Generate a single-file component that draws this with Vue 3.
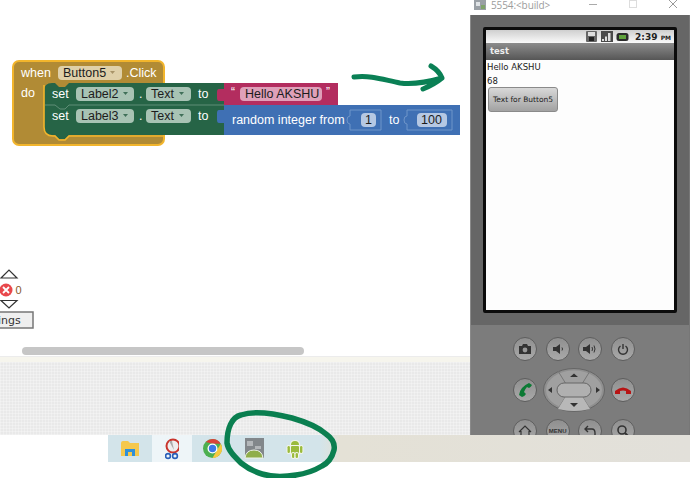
<script setup>
</script>

<template>
  <div class="page">
    <div class="top">
      <div class="workspace">
        <svg class="canvas" width="470" height="357" viewBox="0 0 470 357">
          <rect x="13" y="61" width="151" height="84" rx="6" fill="#b18b35" stroke="#f2b52c" stroke-width="2" />
          <path d="M44 91 Q44 83 52 83 H55 L59 87 H65 L69 83 H224 V135 H69 L65 139 H59 L55 135 H52 Q44 135 44 127 Z" fill="#266446" />
          <path d="M44 85 V127 Q44 136 53 136 H55 L59 140 H65 L69 136 H165" fill="none" stroke="#f2b52c" stroke-width="1.6" />
          <path d="M45 105 H55 L60 109 H65 L69 105 H224" fill="none" stroke="#5e8d76" stroke-width="1" />

          <rect x="224" y="83" width="114" height="22" fill="#b32d5f" />
          <rect x="224" y="105" width="236" height="30" fill="#3f70b4" />
          <path d="M224 89 H219 Q217 89 217 92 V98 Q217 101 219 101 H224 Z" fill="#b32d5f" />
          <path d="M224 110 H219 Q217 110 217 113 V120 Q217 123 219 123 H224 Z" fill="#3f70b4" />

          <g class="bt">
            <text x="21" y="77">when</text>
            <text x="126" y="77">.Click</text>
            <text x="21" y="97">do</text>
            <text x="52" y="98">set</text>
            <text x="52" y="120">set</text>
            <text x="139" y="98">.</text>
            <text x="139" y="120">.</text>
            <text x="198" y="98">to</text>
            <text x="198" y="120">to</text>
            <text x="232" y="124">random integer from</text>
            <text x="389" y="124">to</text>
            <text x="231" y="96" class="q">“</text>
            <text x="326" y="96" class="q">”</text>
          </g>

          <rect x="58" y="66" width="64" height="14" rx="4" fill="#dfd0a9" />
          <rect x="76" y="87" width="58" height="14" rx="4" fill="#a8c3b4" />
          <rect x="146" y="87" width="45" height="14" rx="4" fill="#a8c3b4" />
          <rect x="76" y="109" width="58" height="14" rx="4" fill="#a8c3b4" />
          <rect x="146" y="109" width="45" height="14" rx="4" fill="#a8c3b4" />
          <rect x="240" y="87" width="82" height="14" rx="4" fill="#dfa0b9" />

          <path d="M350 110 H381 V130 H350 V124 Q347 124 347 120 Q347 116 350 116 Z" fill="#3f70b4" stroke="#6f95c9" stroke-width="1" />
          <path d="M407 110 H452 V130 H407 V124 Q404 124 404 120 Q404 116 407 116 Z" fill="#3f70b4" stroke="#6f95c9" stroke-width="1" />
          <rect x="361" y="113" width="15" height="14" rx="4" fill="#b5c8e3" />
          <rect x="417" y="113" width="30" height="14" rx="4" fill="#b5c8e3" />

          <g class="dt">
            <text x="63" y="77">Button5</text>
            <text x="81" y="98">Label2</text>
            <text x="151" y="98">Text</text>
            <text x="81" y="120">Label3</text>
            <text x="151" y="120">Text</text>
            <text x="245" y="98">Hello AKSHU</text>
            <text x="365" y="124">1</text>
            <text x="421" y="124">100</text>
          </g>

          <path d="M110 71 h5 l-2.5 3 z" fill="#a89468" />
          <g fill="#3f6f58">
            <path d="M123 92 h5 l-2.5 3 z" />
            <path d="M179 92 h5 l-2.5 3 z" />
            <path d="M123 114 h5 l-2.5 3 z" />
            <path d="M179 114 h5 l-2.5 3 z" />
          </g>

          <path d="M1 278 L9 270 L17 278 Z" fill="#fff" stroke="#333" stroke-width="1.2" />
          <circle cx="6" cy="290" r="6.5" fill="#e8484c" />
          <path d="M3 287 L9 293 M9 287 L3 293" stroke="#fff" stroke-width="1.8" />
          <text x="15.5" y="294" class="zero">0</text>
          <path d="M1 300.5 H17 L9 308 Z" fill="#fff" stroke="#333" stroke-width="1.2" />
          <rect x="-3" y="312" width="36" height="16" fill="#efefef" stroke="#777" stroke-width="1.5" />
          <text x="-2" y="324" class="btn">ings</text>
        </svg>
        <div class="scrollbar"></div>
        <div class="rule"></div>
        <div class="lower"></div>
      </div>

      <div class="emulator">
        <div class="titlebar">
          <svg class="appicon" width="12" height="10" viewBox="0 0 12 10">
            <rect x="0" y="0" width="12" height="10" fill="#9aa0a6" />
            <rect x="2" y="2" width="4" height="4" fill="#dfe3e6" />
            <rect x="7" y="5" width="4" height="4" fill="#7fa36b" />
          </svg>
          <span class="wintitle">5554:&lt;build&gt;</span>
          <div class="winctl">
            <svg width="10" height="10" viewBox="0 0 10 10"><path d="M1 4.5 H9" stroke="#aaa" /></svg>
            <svg width="10" height="10" viewBox="0 0 10 10"><rect x="1.5" y="0.5" width="7" height="7" fill="none" stroke="#ddd" /></svg>
            <svg width="10" height="10" viewBox="0 0 10 10"><path d="M1 0 L9 8 M9 0 L1 8" stroke="#999" /></svg>
          </div>
        </div>
        <div class="body">
          <div class="frame">
            <div class="screen">
              <div class="status">
                <svg width="28" height="11" viewBox="0 0 28 11">
                  <rect x="0" y="0" width="11" height="11" rx="1" fill="#666" />
                  <rect x="2" y="1" width="7" height="4" fill="#ddd" />
                  <rect x="3" y="6" width="5" height="4" fill="#222" />
                  <rect x="15" y="0" width="12" height="11" fill="#4a4a4a" />
                  <path d="M16 10 V8 H18 V10 Z M19 10 V5.5 H21 V10 Z M22 10 V2 H24.5 V10 Z" fill="#ddd" />
                </svg>
                <svg class="batt" width="13" height="10" viewBox="0 0 13 10">
                  <rect x="0.5" y="1" width="12" height="8" rx="2.5" fill="#2b2b2b" />
                  <rect x="3" y="3" width="7" height="4" fill="#5fa23c" />
                </svg>
                <span class="clock">2:39 <small>PM</small></span>
              </div>
              <div class="apptitle">test</div>
              <div class="appbody">
                <div class="label">Hello AKSHU</div>
                <div class="label second">68</div>
                <div class="appbtn">Text for Button5</div>
              </div>
            </div>
          </div>
          <div class="keypad">
            <div class="keyrow">
              <div class="key"><svg width="14" height="12" viewBox="0 0 14 12"><path d="M1 3 H4 L5 1 H9 L10 3 H13 V11 H1 Z" fill="#333" /><circle cx="7" cy="7" r="2.4" fill="#999" /></svg></div>
              <div class="key"><svg width="14" height="12" viewBox="0 0 14 12"><path d="M2 4 H5 L9 1 V11 L5 8 H2 Z" fill="#333" /><path d="M11 4.5 Q12 6 11 7.5" stroke="#333" fill="none" /></svg></div>
              <div class="key"><svg width="16" height="12" viewBox="0 0 16 12"><path d="M1 4 H4 L8 1 V11 L4 8 H1 Z" fill="#333" /><path d="M10 4 Q11 6 10 8 M12 2.5 Q14 6 12 9.5" stroke="#333" fill="none" /></svg></div>
              <div class="key"><svg width="12" height="12" viewBox="0 0 12 12"><path d="M3.5 3 A4.5 4.5 0 1 0 8.5 3" fill="none" stroke="#333" stroke-width="1.4" /><path d="M6 1 V6" stroke="#333" stroke-width="1.4" /></svg></div>
            </div>
            <div class="keyrow">
              <div class="key"><svg width="16" height="16" viewBox="0 0 16 16"><path d="M12 1 L15 3 Q14 5 12 6 L10 5 Q8 7 7 10 L9 12 Q7 15 5 15 L2 13 Q3 5 12 1 Z" fill="#0c7a34" /></svg></div>
              <div class="dpad">
                <svg width="62" height="44" viewBox="0 0 62 44">
                  <ellipse cx="31" cy="22" rx="30.5" ry="21.5" fill="#8f8f8f" stroke="#666" />
                  <ellipse cx="31" cy="22" rx="28" ry="19.5" fill="#a0a0a0" />
                  <path d="M15 3 L23 16 M47 3 L39 16 M15 41 L23 28 M47 41 L39 28" stroke="#777" />
                  <path d="M23 28 H39 L47 41 Q31 45 15 41 Z" fill="#b8b8b8" />
                  <rect x="14" y="15" width="34" height="14" rx="7" fill="#b0b0b0" stroke="#666" />
                  <path d="M27 9 H35 L31 5.5 Z M27 35 H35 L31 39 Z M9 19 V25 L5 22 Z M53 19 V25 L57 22 Z" fill="#333" />
                </svg>
              </div>
              <div class="key"><svg width="18" height="10" viewBox="0 0 18 10"><path d="M1 6 Q9 -1 17 6 V9 H12 V6 Q9 5 6 6 V9 H1 Z" fill="#b81414" /></svg></div>
            </div>
            <div class="keyrow">
              <div class="key"><svg width="14" height="12" viewBox="0 0 14 12"><path d="M1 7 L7 1 L13 7 M3 6 V12 H11 V6" fill="none" stroke="#333" stroke-width="1.2" /></svg></div>
              <div class="key menu">MENU</div>
              <div class="key"><svg width="14" height="12" viewBox="0 0 14 12"><path d="M5 1 L2 4 L5 7 M2 4 H9 Q12 4 12 8 V12" fill="none" stroke="#333" stroke-width="1.4" /></svg></div>
              <div class="key"><svg width="14" height="14" viewBox="0 0 14 14"><circle cx="6" cy="6" r="4" fill="none" stroke="#333" stroke-width="1.6" /><path d="M9 9 L13 13" stroke="#333" stroke-width="2" /></svg></div>
            </div>
          </div>
        </div>
      </div>
    </div>

    <div class="taskbar">
      <div class="blank"></div>
      <div class="cell wide">
        <svg width="20" height="17" viewBox="0 0 20 17">
          <path d="M1 3 Q1 1 3 1 H8 L10 3 H19 V16 H1 Z" fill="#f5c84c" />
          <path d="M5 16 V9 H15 V16 H12 V12 H8 V16 Z" fill="#2f8fd8" />
        </svg>
      </div>
      <div class="cell light">
        <svg width="14" height="22" viewBox="0 0 14 22">
          <circle cx="8" cy="8" r="6.5" fill="#eee" stroke="#c9342c" stroke-width="2" />
          <path d="M7 3 L9 12 L4 3 Z" fill="#aaa" />
          <circle cx="3" cy="18" r="2.4" fill="none" stroke="#2a5fb8" stroke-width="1.6" />
          <circle cx="10" cy="18" r="2.4" fill="none" stroke="#2a5fb8" stroke-width="1.6" />
        </svg>
      </div>
      <div class="cell">
        <svg width="19" height="19" viewBox="0 0 20 20">
          <circle cx="10" cy="10" r="10" fill="#4caf50" />
          <path d="M10 0 A10 10 0 0 1 18.7 5 L10 5 L3 3.2 A10 10 0 0 1 10 0 Z" fill="#d9433a" />
          <path d="M18.7 5 A10 10 0 0 1 10 20 L14.5 12 Z" fill="#f7c93e" />
          <circle cx="10" cy="10" r="4.6" fill="#3b78e7" stroke="#fff" stroke-width="1.4" />
        </svg>
      </div>
      <div class="cell">
        <svg width="20" height="22" viewBox="0 0 20 22">
          <rect x="1" y="0" width="19" height="20" fill="#82878b" />
          <rect x="3" y="3" width="6" height="5" fill="#b3b7ba" />
          <rect x="11" y="8" width="6" height="3" fill="#b3b7ba" />
          <path d="M1 20 Q2 12 10 12 Q18 12 19 20 Z" fill="#8fae4b" stroke="#eef3ea" />
        </svg>
      </div>
      <div class="cell">
        <svg width="18" height="22" viewBox="0 0 18 22">
          <g stroke="#f2f5ea" stroke-width="2" paint-order="stroke" fill="#9bbb3c">
            <path d="M5 7 Q5 3 9 3 Q13 3 13 7 Z" />
            <rect x="5" y="8" width="8" height="8" rx="1" />
            <rect x="1.5" y="8" width="2.4" height="7" rx="1.2" />
            <rect x="14" y="8" width="2.4" height="7" rx="1.2" />
            <rect x="6" y="15" width="2.4" height="5" rx="1.2" />
            <rect x="9.6" y="15" width="2.4" height="5" rx="1.2" />
          </g>
        </svg>
      </div>
      <div class="fill"></div>
    </div>

    <svg class="ink" width="690" height="478" viewBox="0 0 690 478">
      <path d="M354 77 C372 75 384 80 400 83 C415 85 428 82 442 78 M431 66 C436 69 440 73 442 78 C436 83 430 86 423 89" fill="none" stroke="#0a8055" stroke-width="5" stroke-linecap="round" stroke-linejoin="round" />
      <path d="M227 443 C227 428 232 417 241 415 C256 410 276 414 292 418 C306 422 318 427 326 434 C333 439 335 445 334 450 C332 458 328 463 322 466 C312 472 304 474 296 475 C284 477 272 477 262 474 C252 471 246 467 241 463 C234 456 228 450 227 443 Z" fill="none" stroke="#0a7f50" stroke-width="5.5" />
    </svg>
  </div>
</template>

<style>
html, body { margin: 0; padding: 0; background: #fff; }
</style>

<style scoped>
.page {
  position: relative;
  width: 690px;
  height: 478px;
  overflow: hidden;
  background: #fff;
  font-family: "Liberation Sans", Arial, sans-serif;
}
.top { display: flex; height: 435px; }
.workspace {
  position: relative;
  width: 470px;
  display: flex;
  flex-direction: column;
  justify-content: flex-end;
}
.canvas { position: absolute; left: 0; top: 0; }
.bt text { fill: #fff; font: 12.5px "Liberation Sans", Arial, sans-serif; }
.bt .q { font-size: 12px; }
.dt text { fill: #1c1c1c; font: 12.5px "Liberation Sans", Arial, sans-serif; }
.zero { fill: #8a5a2a; font: 11px "Liberation Sans", Arial, sans-serif; }
.btn { fill: #333; font: 11px "DejaVu Sans", sans-serif; }
.scrollbar {
  position: absolute;
  left: 22px;
  top: 347px;
  width: 282px;
  height: 8px;
  border-radius: 4px;
  background: #c6c6c6;
}
.rule {
  height: 5px;
  flex: none;
  background: #f6f5ed;
  border-top: 1px solid #ececec;
}
.lower {
  height: 73px;
  flex: none;
  background-color: #e9e9e9;
  background-image:
    repeating-linear-gradient(0deg, rgba(255,255,255,.28) 0 1px, transparent 1px 3px),
    repeating-linear-gradient(90deg, rgba(255,255,255,.28) 0 1px, transparent 1px 3px);
}
.emulator {
  width: 220px;
  display: flex;
  flex-direction: column;
  background: #fff;
}
.titlebar {
  height: 15px;
  display: flex;
  align-items: center;
  padding-left: 4px;
  gap: 5px;
  background: #fff;
}
.appicon { flex: none; margin-top: -5px; }
.wintitle { font: 10px "Open Sans", sans-serif; color: #9c9c9c; margin-top: -6px; letter-spacing: -0.1px; }
.winctl {
  margin-left: auto;
  display: flex;
  gap: 30px;
  padding-right: 12px;
  margin-top: -6px;
}
.body {
  flex: 1;
  min-height: 0;
  background: #666;
  border-left: 1px solid #8a8a8a;
  border-right: 1px solid #777;
  display: flex;
  flex-direction: column;
  overflow: hidden;
}
.frame {
  height: 310px;
  padding: 12px 12px 0;
  flex: none;
  box-sizing: border-box;
}
.frame .screen {
  height: 286px;
  box-sizing: border-box;
  border: 3.5px solid #0b0b0b;
  border-radius: 2px;
  background: #fdfdfd;
  display: flex;
  flex-direction: column;
}
.status {
  height: 13px;
  flex: none;
  display: flex;
  align-items: center;
  justify-content: flex-end;
  padding-right: 3px;
  background: linear-gradient(#cfcfcf, #fafafa);
}
.batt { margin-left: 2px; }
.clock {
  font: bold 9px "DejaVu Sans", sans-serif;
  color: #222;
  margin-left: 6px;
}
.clock small { font-size: 6px; }
.apptitle {
  height: 17px;
  flex: none;
  box-sizing: border-box;
  padding-left: 4px;
  background: linear-gradient(#8c8c8c, #565656);
  color: #eee;
  font: bold 8.5px/17px "DejaVu Sans", sans-serif;
}
.appbody { padding: 1px 0 0 1px; }
.label {
  font: 8.5px/12px "DejaVu Sans", sans-serif;
  color: #222;
}
.second { margin-top: 2px; }
.appbtn {
  width: 70px;
  height: 25px;
  margin: 0 0 0 1px;
  box-sizing: border-box;
  border: 1px solid #8a8a8a;
  border-radius: 3px;
  background: linear-gradient(#d8d8d8, #a2a2a2);
  color: #222;
  font: 7.5px/23px "DejaVu Sans", sans-serif;
  text-align: center;
  white-space: nowrap;
}
.keypad {
  flex: 1;
  background: #7c7c7c;
  box-sizing: border-box;
  padding: 12px 54px 0 42px;
  display: flex;
  flex-direction: column;
  gap: 17px;
}
.keyrow {
  display: flex;
  justify-content: space-between;
  align-items: center;
  height: 24px;
  flex: none;
}
.key {
  width: 22px;
  height: 22px;
  border-radius: 50%;
  border: 1px solid #5e5e5e;
  background: linear-gradient(#8f8f8f, #a9a9a9);
  display: flex;
  align-items: center;
  justify-content: center;
}
.menu { font: bold 6px "Liberation Sans", sans-serif; color: #333; }
.dpad { width: 62px; height: 44px; flex: none; line-height: 0; }
.taskbar { display: flex; height: 27px; }
.blank { width: 108px; background: #fff; }
.cell {
  width: 41px;
  flex: none;
  background: #d3e4ea;
  display: flex;
  align-items: center;
  justify-content: center;
}
.cell.wide { width: 44px; }
.cell.light { width: 40px; background: #eef5f8; }
.fill { flex: 1; background: linear-gradient(90deg, #d3e4ea 0, #d3e4ea 5px, #e4e1d6 25px, #e2e0da 100%); }
.ink { position: absolute; left: 0; top: 0; pointer-events: none; }
</style>
